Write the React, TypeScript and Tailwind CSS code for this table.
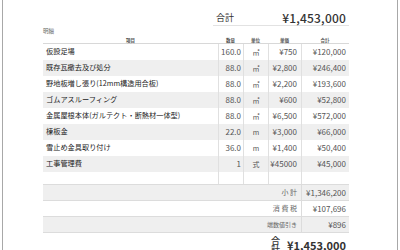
import React from "react";

const rows: [string, string, string, string, string][] = [
  ["仮設足場", "160.0", "㎡", "¥750", "¥120,000"],
  ["既存瓦撤去及び処分", "88.0", "㎡", "¥2,800", "¥246,400"],
  ["野地板増し張り(12mm構造用合板)", "88.0", "㎡", "¥2,200", "¥193,600"],
  ["ゴムアスルーフィング", "88.0", "㎡", "¥600", "¥52,800"],
  ["金属屋根本体(ガルテクト・断熱材一体型)", "88.0", "㎡", "¥6,500", "¥572,000"],
  ["棟板金", "22.0", "m", "¥3,000", "¥66,000"],
  ["雪止め金具取り付け", "36.0", "m", "¥1,400", "¥50,400"],
  ["工事管理費", "1", "式", "¥45000", "¥45,000"],
];

const summary: [string, string, string][] = [
  ["小 計", "¥1,346,200", "text-[7px]"],
  ["消 費 税", "¥107,696", "text-[7px]"],
  ["端数値引き", "¥896", "text-[6px]"],
];

const font = { fontFamily: '"Noto Sans CJK JP", "Noto Sans", sans-serif' };

export default function App() {
  return (
    <div className="w-[400px] h-[250px] overflow-hidden bg-white px-[2px]" style={font}>
      <div className="h-full border-x border-[#a8a8a8] pl-[40px] text-[#333]">
        <div className="w-[306px]">
          <div className="ml-[170px] flex items-center justify-between border-b border-[#e2e2e2] pl-[3px] pr-[3px] pt-[10px] h-[26px] leading-none">
            <span className="text-[9px]">合計</span>
            <span className="text-[12px] font-medium tracking-[0.2px]">¥1,453,000</span>
          </div>
          <div className="text-[5.5px] leading-none text-[#666] pt-[3px] h-[10px]">明細</div>
          <div className="grid grid-cols-[175px_25px_25px_33px_48px] border-b border-[#d8d8d8] h-[8px] items-end pb-[1px] text-[4.5px] leading-none text-[#555] font-bold text-center">
            <div>項目</div>
            <div>数量</div>
            <div>単位</div>
            <div>単価</div>
            <div>合計</div>
          </div>
          {rows.map((r, i) => (
            <div
              key={i}
              className={`grid grid-cols-[175px_25px_25px_33px_48px] h-[16px] items-stretch leading-none ${i % 2 === 1 ? "bg-[#efefef]" : "bg-white"}`}
            >
              <div className="flex items-center pl-[3px] text-[7.2px] text-[#222] whitespace-nowrap">{r[0]}</div>
              <div className="flex items-center justify-end pr-[2px] border-l border-[#e0e0e0] text-[8px] text-[#555]">{r[1]}</div>
              <div className="flex items-center justify-center border-l border-[#e0e0e0] text-[7px] text-[#555]">{r[2]}</div>
              <div className="flex items-center justify-end pr-[4px] border-l border-[#e0e0e0] text-[8px] text-[#555]">{r[3]}</div>
              <div className="flex items-center justify-end pr-[3px] border-l border-[#e0e0e0] text-[8px] text-[#555]">{r[4]}</div>
            </div>
          ))}
          <div className="grid grid-cols-[175px_25px_25px_33px_48px] h-[12px]">
            <div />
            <div className="border-l border-[#e0e0e0]" />
            <div className="border-l border-[#e0e0e0]" />
            <div className="border-l border-[#e0e0e0]" />
            <div className="border-l border-[#e0e0e0]" />
          </div>
          <div className="border-t border-[#dcdcdc]">
            {summary.map((s, i) => (
              <div
                key={i}
                className={`grid grid-cols-[258px_48px] h-[16px] leading-none border-b border-[#dcdcdc] ${i % 2 === 0 ? "bg-[#efefef]" : "bg-white"}`}
              >
                <div className={`flex items-center justify-end pr-[4px] text-[#666] ${s[2]}`}>{s[0]}</div>
                <div className="flex items-center justify-end pr-[3px] border-l border-[#dcdcdc] text-[8px] text-[#555]">{s[1]}</div>
              </div>
            ))}
          </div>
          <div className="ml-[228px] flex items-center justify-between pr-[3px] pt-[3px] leading-none">
            <span className="text-[9px] font-medium">合計</span>
            <span className="text-[11px] font-semibold">¥1,453,000</span>
          </div>
        </div>
      </div>
    </div>
  );
}
